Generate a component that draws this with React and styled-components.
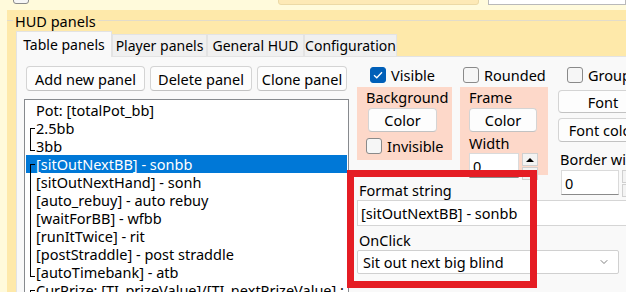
import styled, { createGlobalStyle } from "styled-components"
import { ChevronDown } from "lucide-react"

const GlobalStyle = createGlobalStyle`
  html, body {
    margin: 0;
    padding: 0;
    background: #fffadb;
  }
  body {
    font-family: "Noto Sans", "Segoe UI", sans-serif;
    font-size: 14.5px;
    color: #000;
  }
`

const Page = styled.div`
  width: 626px;
  height: 292px;
  overflow: hidden;
  background: #fffadb;
`

const TopStrip = styled.div`
  height: 10px;
  overflow: hidden;
`

const TopRow = styled.div`
  display: flex;
  align-items: flex-end;
  height: 20px;
  margin-top: -16px;
`

const TopCheck = styled.span`
  width: 14px;
  height: 17px;
  margin-left: 13px;
  border: 1px solid #8a8a8a;
  border-radius: 3px;
  background: #f6f6f6;
`

const TopLabel = styled.span`
  align-self: flex-start;
  margin-top: -5px;
  margin-left: 33px;
  line-height: 20px;
  color: #1a1a1a;
  width: 216px;
`

const TopBox = styled.span`
  width: 199px;
  height: 23px;
  margin-bottom: -1px;
  border: 1px solid #ecd9a6;
  background: #fde9b6;
  border-radius: 3px;
`

const TopInput = styled.span`
  flex: 1;
  height: 23px;
  margin-left: 9px;
  margin-bottom: -1px;
  border: 1px solid #b9b9b9;
  background: #fff;
`

const GroupBox = styled.div`
  margin-left: 7px;
  height: 282px;
  background: #fee9aa;
  display: flex;
  flex-direction: column;
`

const GroupTitle = styled.div`
  height: 21px;
  display: flex;
  align-items: center;
  gap: 2px;
  line-height: 20px;
  padding-top: 1px;
  box-sizing: border-box;

  &::before,
  &::after {
    content: "";
    height: 1px;
    background: #e2dccb;
    margin-top: -2px;
  }
  &::before {
    width: 6px;
  }
  &::after {
    flex: 1;
  }
`

const TabBar = styled.div`
  display: flex;
  align-items: flex-end;
  height: 25px;
  margin-left: 9px;
`

const Tab = styled.div`
  width: ${({ $w }) => $w}px;
  height: ${({ $active }) => ($active ? 26 : 22)}px;
  box-sizing: border-box;
  display: flex;
  align-items: center;
  justify-content: center;
  background: ${({ $active }) => ($active ? "#f9f9f9" : "#f0f0f0")};
  border: 1px solid #e3e3e3;
  border-bottom: none;
  margin-bottom: ${({ $active }) => ($active ? -1 : 0)}px;
  position: relative;
  z-index: ${({ $active }) => ($active ? 1 : 0)};
  font-size: 14px;
  line-height: 20px;
  padding-top: ${({ $active }) => ($active ? 0 : 1)}px;
  white-space: nowrap;
  overflow: hidden;
`

const TabPane = styled.div`
  flex: 1;
  margin-left: 9px;
  background: #f9f9f9;
  border-top: 1px solid #e3e3e3;
  border-left: 1px solid #e3e3e3;
  display: flex;
  padding: 9px 0 0 7px;
  min-height: 0;
`

const LeftColumn = styled.div`
  width: 325px;
  flex-shrink: 0;
  display: flex;
  flex-direction: column;
  gap: 8px;
`

const ButtonRow = styled.div`
  display: flex;
  gap: 5px;
  padding-left: 2px;
`

const Button = styled.div`
  width: ${({ $w }) => $w}px;
  height: ${({ $h }) => $h || 25}px;
  box-sizing: border-box;
  flex-shrink: 0;
  display: flex;
  align-items: center;
  justify-content: center;
  background: #fdfdfd;
  border: 1px solid #d4d4d4;
  border-bottom-color: #c2c2c2;
  border-radius: 4px;
  line-height: 20px;
  white-space: nowrap;
`

const PanelList = styled.div`
  flex: 1;
  background: #fff;
  border: 1px solid #878a8e;
  border-bottom: none;
  padding: 1px 1px 0;
  overflow: hidden;
`

const Row = styled.div`
  position: relative;
  height: 18px;
  line-height: 18px;
  padding-left: 10px;
  white-space: nowrap;
  background: ${({ $selected }) => ($selected ? "#0078d7" : "transparent")};
  color: ${({ $selected }) => ($selected ? "#fff" : "#000")};

  &::before {
    content: "";
    position: absolute;
    left: 4px;
    width: 1px;
    background: #000;
    display: ${({ $bracket }) => ($bracket ? "block" : "none")};
    top: ${({ $bracket }) => ($bracket === "start" ? 9 : 0)}px;
    bottom: ${({ $bracket }) => ($bracket === "end" ? 4 : 0)}px;
  }

  &::after {
    content: "";
    position: absolute;
    left: 4px;
    width: 5px;
    height: 1px;
    background: #000;
    display: ${({ $bracket }) => ($bracket === "start" || $bracket === "end" ? "block" : "none")};
    top: ${({ $bracket }) => ($bracket === "end" ? 13 : 9)}px;
  }
`

const RightColumn = styled.div`
  position: relative;
  margin-left: 8px;
  width: 300px;
  flex-shrink: 0;
  display: grid;
  grid-template-columns: 95px 90px 1fr;
  column-gap: 8px;
  grid-template-rows: 18px 91px 25px 26px 24px 24px;
  align-content: start;
`

const CheckRow = styled.div`
  grid-column: 1 / -1;
  display: flex;
`

const CheckCell = styled.label`
  box-sizing: border-box;
  display: flex;
  align-items: center;
  gap: 5px;
  width: ${({ $w }) => ($w ? `${$w}px` : "auto")};
  padding-left: ${({ $pad }) => $pad || 0}px;
  margin-top: ${({ $mt }) => $mt || 0}px;
  line-height: 18px;
  white-space: nowrap;
`

const Box = styled.span`
  width: 14px;
  height: 14px;
  flex-shrink: 0;
  border-radius: 3px;
  border: 1px solid ${({ $checked }) => ($checked ? "#005fb8" : "#8a8a8a")};
  background: ${({ $checked }) => ($checked ? "#005fb8" : "#f6f6f6")};
  display: flex;
  align-items: center;
  justify-content: center;
`

const ColorPanel = styled.div`
  grid-row: 2 / 3;
  margin-top: 3px;
  width: ${({ $w }) => $w}px;
  height: ${({ $h }) => $h}px;
  background: #fdd8c9;
  box-sizing: border-box;
  padding-left: 9px;
  display: flex;
  flex-direction: column;
  align-items: flex-start;
  white-space: nowrap;
`

const PanelLabel = styled.div`
  line-height: 20px;
  height: 20px;
  margin-top: ${({ $mt }) => $mt || 0}px;
  margin-bottom: ${({ $mb }) => $mb || 0}px;
  padding-left: ${({ $pl }) => $pl || 0}px;
  white-space: nowrap;
`

const FontColumn = styled.div`
  grid-row: 2 / 4;
  grid-column: 3;
  padding-top: 6px;
  display: flex;
  flex-direction: column;
  gap: 5px;
`

const SpinGroup = styled.div`
  display: flex;
  gap: 3px;
  padding-left: ${({ $pl }) => $pl || 0}px;
  margin-top: ${({ $mt }) => $mt || 0}px;
`

const SpinInput = styled.div`
  width: ${({ $w }) => $w}px;
  height: 25px;
  box-sizing: border-box;
  background: #fff;
  border: 1px solid #dadada;
  border-bottom: 1px solid #8a8a8a;
  padding-left: 3px;
  line-height: 24px;
`

const SpinButtons = styled.div`
  width: 16px;
  display: flex;
  flex-direction: column;
  gap: 1px;
`

const SpinButton = styled.div`
  height: 11px;
  background: #f3f3f3;
  border: 1px solid #d0d0d0;
  display: flex;
  align-items: center;
  justify-content: center;
`

const Arrow = styled.span`
  width: 0;
  height: 0;
  border-left: 4px solid transparent;
  border-right: 4px solid transparent;
  ${({ $down }) => ($down ? "border-top: 4px solid #000;" : "border-bottom: 4px solid #000;")}
`

const FieldLabel = styled.div`
  grid-column: ${({ $span }) => $span || "1 / -1"};
  line-height: 20px;
  padding-left: 2px;
  align-self: end;
`

const TextField = styled.div`
  grid-column: 1 / -1;
  height: 26px;
  box-sizing: border-box;
  background: #fff;
  border: 1px solid #d5d5d5;
  padding-left: 3px;
  line-height: 24px;
  white-space: nowrap;
`

const Select = styled.div`
  grid-column: 1 / -1;
  width: 262px;
  height: 24px;
  box-sizing: border-box;
  background: #fff;
  border: 1px solid #d0d0d0;
  border-radius: 2px;
  display: flex;
  align-items: center;
  justify-content: space-between;
  padding: 0 8px 0 5px;
  white-space: nowrap;
`

const Highlight = styled.div`
  position: absolute;
  left: -10px;
  top: 104px;
  width: 190px;
  height: 118px;
  box-sizing: border-box;
  border: 7px solid #e51d24;
  pointer-events: none;
`

const rows = [
  { text: "Pot: [totalPot_bb]" },
  { text: "2.5bb", bracket: "start" },
  { text: "3bb", bracket: "end" },
  { text: "[sitOutNextBB] - sonbb", bracket: "start", selected: true },
  { text: "[sitOutNextHand] - sonh", bracket: "mid" },
  { text: "[auto_rebuy] - auto rebuy", bracket: "mid" },
  { text: "[waitForBB] - wfbb", bracket: "mid" },
  { text: "[runItTwice] - rit", bracket: "mid" },
  { text: "[postStraddle] - post straddle", bracket: "mid" },
  { text: "[autoTimebank] - atb", bracket: "end" },
  { text: "CurPrize: [TI_prizeValue]/[TI_nextPrizeValue] : ", bracket: "start" },
]

function CheckBox({ checked }) {
  return (
    <Box $checked={checked}>
      {checked && (
        <svg width="10" height="8" viewBox="0 0 10 8" fill="none">
          <path d="M1 4.2 L3.8 6.8 L9 1.2" stroke="#fff" strokeWidth="1.3" />
        </svg>
      )}
    </Box>
  )
}

export default function App() {
  return (
    <Page>
      <GlobalStyle />
      <TopStrip>
        <TopRow>
          <TopCheck />
          <TopLabel>Hide away</TopLabel>
          <TopBox />
          <TopInput />
        </TopRow>
      </TopStrip>

      <GroupBox>
        <GroupTitle>HUD panels</GroupTitle>
        <TabBar>
          <Tab $active $w={96}>Table panels</Tab>
          <Tab $w={95}>Player panels</Tab>
          <Tab $w={97}>General HUD</Tab>
          <Tab $w={93}>Configuration</Tab>
        </TabBar>

        <TabPane>
          <LeftColumn>
            <ButtonRow>
              <Button $w={119}>Add new panel</Button>
              <Button $w={102}>Delete panel</Button>
              <Button $w={90}>Clone panel</Button>
            </ButtonRow>
            <PanelList>
              {rows.map((row, i) => (
                <Row key={i} $selected={row.selected} $bracket={row.bracket}>
                  {row.text}
                </Row>
              ))}
            </PanelList>
          </LeftColumn>

          <RightColumn>
            <CheckRow>
              <CheckCell $w={106} $pad={13}>
                <CheckBox checked />
                Visible
              </CheckCell>
              <CheckCell $w={99}>
                <CheckBox />
                Rounded
              </CheckCell>
              <CheckCell $pad={5}>
                <CheckBox />
                Group
              </CheckCell>
            </CheckRow>

            <ColorPanel $w={95} $h={73}>
              <PanelLabel $mb={1}>Background</PanelLabel>
              <Button $w={69} $h={24} style={{ marginLeft: 2 }}>Color</Button>
              <CheckCell $mt={5}>
                <CheckBox />
                Invisible
              </CheckCell>
            </ColorPanel>

            <ColorPanel $w={88} $h={88}>
              <PanelLabel $mb={1}>Frame</PanelLabel>
              <Button $w={68} $h={24}>Color</Button>
              <PanelLabel $mt={1}>Width</PanelLabel>
              <SpinGroup>
                <SpinInput $w={50}>0</SpinInput>
                <SpinButtons>
                  <SpinButton><Arrow /></SpinButton>
                  <SpinButton><Arrow $down /></SpinButton>
                </SpinButtons>
              </SpinGroup>
            </ColorPanel>

            <FontColumn>
              <Button $w={90} $h={23}>Font</Button>
              <Button $w={90} $h={24}>Font color</Button>
              <PanelLabel $pl={2} $mt={2}>Border width</PanelLabel>
              <SpinGroup $pl={3} $mt={-4}>
                <SpinInput $w={58}>0</SpinInput>
                <SpinButtons>
                  <SpinButton><Arrow /></SpinButton>
                  <SpinButton><Arrow $down /></SpinButton>
                </SpinButtons>
              </SpinGroup>
            </FontColumn>

            <FieldLabel $span="1 / 3">Format string</FieldLabel>
            <TextField>[sitOutNextBB] - sonbb</TextField>
            <FieldLabel>OnClick</FieldLabel>
            <Select>
              Sit out next big blind
              <ChevronDown size={12} color="#555" strokeWidth={1.5} />
            </Select>

            <Highlight />
          </RightColumn>
        </TabPane>
      </GroupBox>
    </Page>
  )
}
